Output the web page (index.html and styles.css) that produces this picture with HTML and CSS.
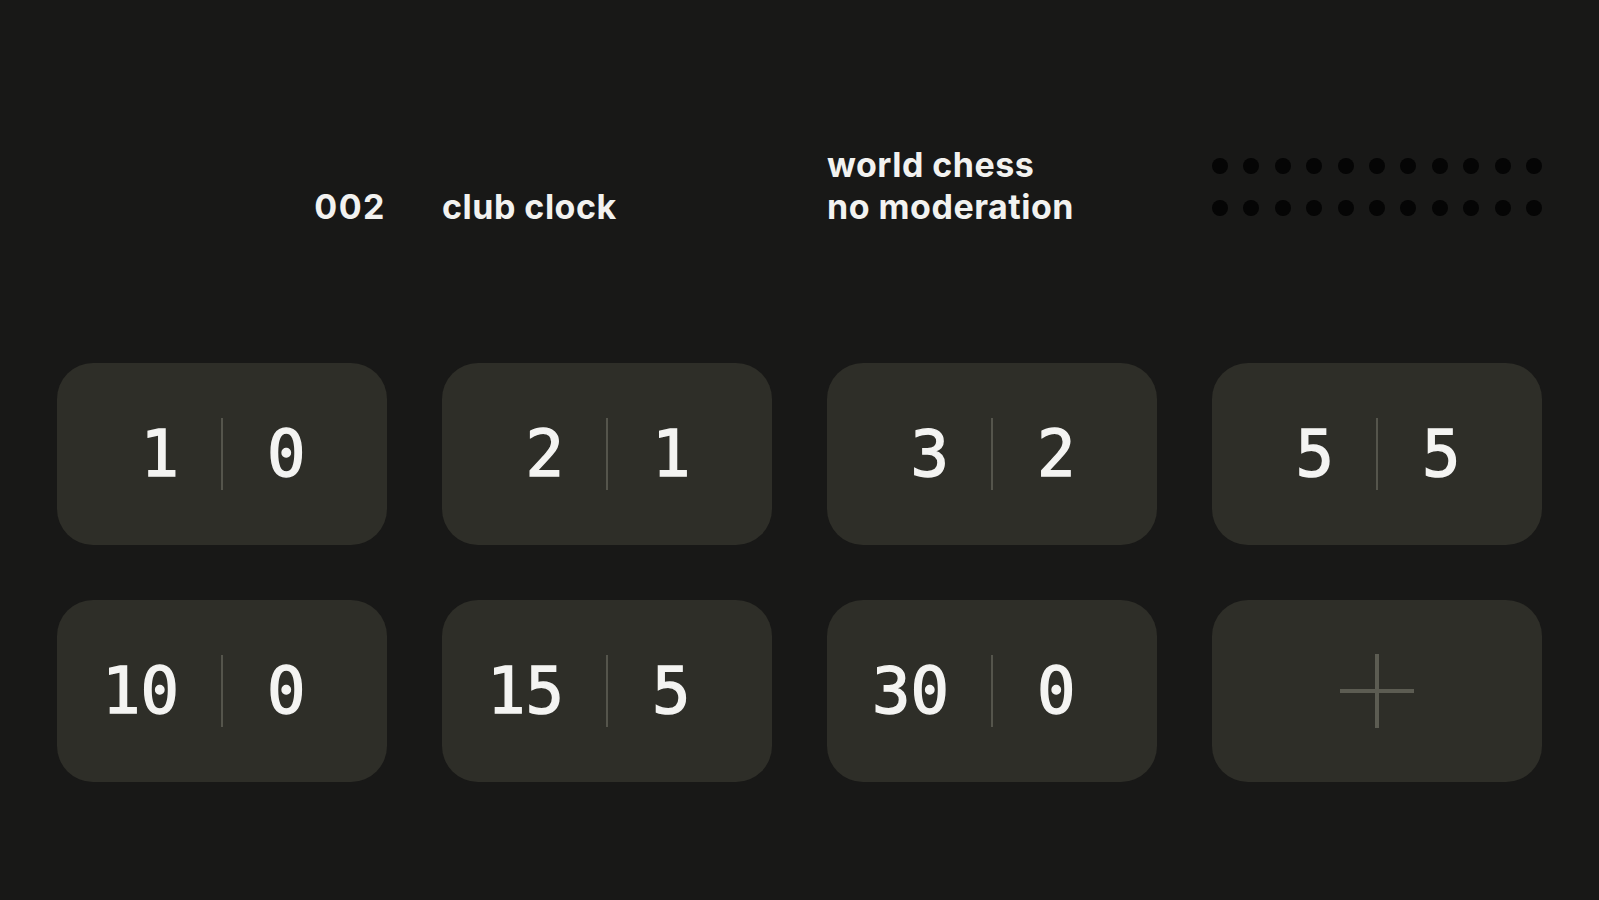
FILE: index.html
```html
<!DOCTYPE html>
<html lang="en">
<head>
<meta charset="utf-8">
<title>Club clock</title>
<link rel="stylesheet" href="styles.css">
</head>
<body>
<main class="page">
  <header class="head">
    <div class="num">002</div>
    <div class="label">club clock</div>
    <div class="label">world chess<br>no moderation</div>
    <div class="dots">
      <div class="dot-row">
        <span class="dot"></span><span class="dot"></span><span class="dot"></span><span class="dot"></span><span class="dot"></span><span class="dot"></span><span class="dot"></span><span class="dot"></span><span class="dot"></span><span class="dot"></span><span class="dot"></span>
      </div>
      <div class="dot-row">
        <span class="dot"></span><span class="dot"></span><span class="dot"></span><span class="dot"></span><span class="dot"></span><span class="dot"></span><span class="dot"></span><span class="dot"></span><span class="dot"></span><span class="dot"></span><span class="dot"></span>
      </div>
    </div>
  </header>
  <section class="grid">
    <button class="card"><span class="l">1</span><span class="bar"></span><span class="r">0</span></button>
    <button class="card"><span class="l">2</span><span class="bar"></span><span class="r">1</span></button>
    <button class="card"><span class="l">3</span><span class="bar"></span><span class="r">2</span></button>
    <button class="card"><span class="l">5</span><span class="bar"></span><span class="r">5</span></button>
    <button class="card"><span class="l">10</span><span class="bar"></span><span class="r">0</span></button>
    <button class="card"><span class="l">15</span><span class="bar"></span><span class="r">5</span></button>
    <button class="card"><span class="l">30</span><span class="bar"></span><span class="r">0</span></button>
    <button class="card add" aria-label="add"><span class="plus"></span></button>
  </section>
</main>
</body>
</html>
```

FILE: styles.css
```css
html, body {
  margin: 0;
  padding: 0;
  background: #181817;
}
body {
  width: 1599px;
  height: 900px;
  overflow: hidden;
}
.page {
  padding: 144px 57px 0;
}
.head {
  display: grid;
  grid-template-columns: repeat(4, 1fr);
  column-gap: 55px;
  align-items: end;
  font-family: Inter, "Liberation Sans", sans-serif;
  font-weight: 700;
  font-size: 34px;
  line-height: 42px;
  letter-spacing: 0.5px;
  color: #f2f2f0;
}
.num {
  text-align: right;
  padding-right: 1px;
  letter-spacing: 1.5px;
}
.dots {
  display: flex;
  flex-direction: column;
}
.dot-row {
  height: 42px;
  display: flex;
  justify-content: space-between;
  align-items: center;
  padding-top: 2px;
  box-sizing: border-box;
}
.dot {
  width: 16px;
  height: 16px;
  border-radius: 50%;
  background: #050505;
}
.grid {
  margin-top: 135px;
  display: grid;
  grid-template-columns: repeat(4, 1fr);
  gap: 55px;
}
.card {
  height: 182px;
  border: 0;
  margin: 0;
  padding: 0;
  border-radius: 36px;
  background: #2e2e28;
  display: grid;
  grid-template-columns: 1fr 2px 1fr;
  align-items: center;
  font-family: "DejaVu Sans Mono", "Liberation Mono", monospace;
  font-weight: 400;
  font-size: 64px;
  line-height: 1;
  color: #f4f4f2;
  -webkit-text-stroke: 1.4px #f4f4f2;
}
.l {
  text-align: right;
  padding-right: 42px;
}
.r {
  text-align: left;
  padding-left: 44px;
}
.bar {
  width: 2px;
  height: 72px;
  background: #55554c;
}
.add {
  display: flex;
  align-items: center;
  justify-content: center;
}
.plus {
  position: relative;
  width: 74px;
  height: 74px;
}
.plus::before,
.plus::after {
  content: "";
  position: absolute;
  background: #5c5c52;
}
.plus::before {
  left: 35px;
  top: 0;
  width: 4px;
  height: 74px;
}
.plus::after {
  top: 35px;
  left: 0;
  height: 4px;
  width: 74px;
}
```
